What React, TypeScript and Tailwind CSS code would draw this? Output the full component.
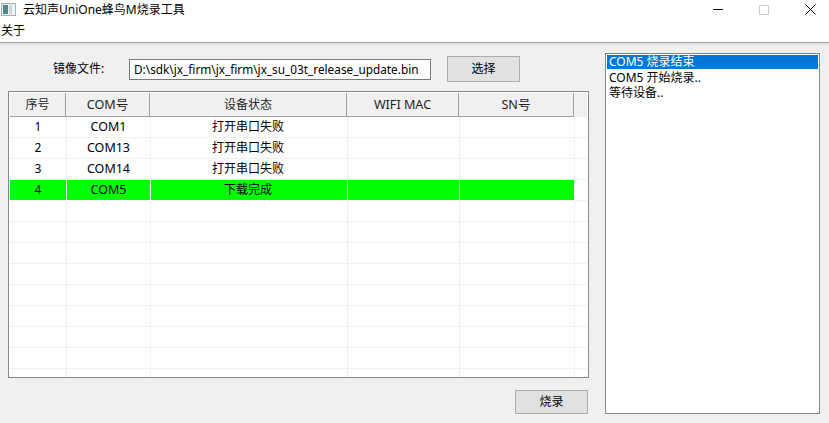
import React from 'react';

const rows = [
  { id: '1', com: 'COM1', status: '打开串口失败' },
  { id: '2', com: 'COM13', status: '打开串口失败' },
  { id: '3', com: 'COM14', status: '打开串口失败' },
  { id: '4', com: 'COM5', status: '下载完成', done: true },
  ...Array.from({ length: 9 }, () => ({ id: '', com: '', status: '' })),
];

const headers = [
  { label: '序号', w: 'w-[56px]', size: 'text-[12px]' },
  { label: 'COM号', w: 'w-[84px]', size: 'text-[12.6px]' },
  { label: '设备状态', w: 'w-[197px]', size: 'text-[12px]' },
  { label: 'WIFI MAC', w: 'w-[112px]', size: 'text-[12.6px]' },
  { label: 'SN号', w: 'w-[115px]', size: 'text-[12.6px]' },
];

function AppIcon() {
  return (
    <svg width="15" height="13" viewBox="0 0 15 13">
      <rect x="0.5" y="0.5" width="14" height="12" fill="#eef0f0" stroke="#a9b0b3" />
      <rect x="2" y="2" width="5" height="9" fill="#4f8a8e" />
      <rect x="8" y="2" width="3" height="9" fill="#c9d8d2" />
      <rect x="12" y="2" width="2" height="9" fill="#f6f6f6" />
    </svg>
  );
}

function Btn({ label, h }: { label: string; h: string }) {
  return (
    <button className={`w-[73px] ${h} bg-[#e1e1e1] border border-[#adadad] flex items-center justify-center text-[12px] text-black`}>
      {label}
    </button>
  );
}

export default function App() {
  return (
    <div className="w-[829px] h-[423px] overflow-hidden bg-[#f0f0f0] text-black text-[12px] leading-[14px] font-['Noto_Sans','Noto_Sans_CJK_SC',sans-serif] flex flex-col">
      <div className="h-[42px] bg-white flex flex-col shrink-0">
        <div className="h-[19px] flex items-center">
          <div className="ml-[1px] w-[22px] flex"><AppIcon /></div>
          <span>云知声UniOne蜂鸟M烧录工具</span>
          <div className="ml-auto flex items-center">
            <div className="w-[46px] ml-[1px] flex justify-center"><div className="w-[10px] h-[1px] bg-black" /></div>
            <div className="w-[46px] flex justify-center"><div className="w-[10px] h-[10px] border border-[#cccccc]" /></div>
            <div className="w-[42px] pr-[13px] flex justify-end">
              <svg width="11" height="11" viewBox="0 0 11 11"><path d="M0.5 0.5L10.5 10.5M10.5 0.5L0.5 10.5" stroke="#000" strokeWidth="1" /></svg>
            </div>
          </div>
        </div>
        <div className="h-[23px] pl-[1px] flex items-center">关于</div>
      </div>
      <div className="h-[1px] bg-[#a0a0a0] shrink-0" />
      <div className="h-[2px] bg-[#e5e5e5] shrink-0" />
      <div className="flex-1 flex pl-[8px] gap-[16px]">
        <div className="w-[581px] flex flex-col">
          <div className="h-[26px] flex items-center mt-[11px] mb-[9px]">
            <span className="ml-[45px] w-[76px]">镜像文件:</span>
            <div className="w-[302px] h-[21px] bg-white border border-[#7a7a7a] pl-[4px] flex items-center whitespace-nowrap overflow-hidden text-[11.8px]">D:\sdk\jx_firm\jx_firm\jx_su_03t_release_update.bin</div>
            <div className="ml-[16px]"><Btn label="选择" h="h-[26px]" /></div>
          </div>
          <div className="h-[287px] bg-white border border-[#828790] p-[1px] flex flex-col overflow-hidden">
            <div className="flex h-[24px] shrink-0 bg-[#f0f0f0]">
              {headers.map((h, i) => (
                <div key={i} className={`${h.w} ${h.size} h-[24px] border-b border-b-[#a0a0a0] border-r border-r-[#a0a0a0] flex items-center justify-center text-[#1f1f1f]`}>{h.label}</div>
              ))}
            </div>
            {rows.map((r, i) => (
              <div key={i} className="flex h-[21px] shrink-0">
                <div className={`w-[57px] flex items-center justify-center border-r border-b ${r.done ? 'bg-[#00ff00] border-r-white border-b-white' : 'border-[#f0f0f0]'}`}>{r.id}</div>
                <div className={`w-[84px] text-[12.5px] flex items-center justify-center border-r border-b ${r.done ? 'bg-[#00ff00] border-r-white border-b-white' : 'border-[#f0f0f0]'}`}>{r.com}</div>
                <div className={`w-[197px] pr-[2px] flex items-center justify-center border-r border-b ${r.done ? 'bg-[#00ff00] border-r-white border-b-white' : 'border-[#f0f0f0]'}`}>{r.status}</div>
                <div className={`w-[112px] border-r border-b ${r.done ? 'bg-[#00ff00] border-r-white border-b-white' : 'border-[#f0f0f0]'}`} />
                <div className={`w-[115px] border-r border-b ${r.done ? 'bg-[#00ff00] border-r-white border-b-white' : 'border-[#f0f0f0]'}`} />
                <div className="flex-1 border-b border-[#f0f0f0]" />
              </div>
            ))}
          </div>
          <div className="flex justify-end pr-[1px] mt-[12px]">
            <Btn label="烧录" h="h-[24px]" />
          </div>
        </div>
        <div className="w-[215px] h-[361px] mt-[8px] bg-white border border-[#828790] p-[1px] shrink-0 leading-[12px]">
          <div className="h-[14px] mb-[1px] bg-[#0078d7] text-white pl-[2px] flex items-center">COM5 烧录结束</div>
          <div className="h-[15px] pl-[2px] flex items-center">COM5 开始烧录..</div>
          <div className="h-[15px] pl-[2px] flex items-center">等待设备..</div>
        </div>
      </div>
    </div>
  );
}
